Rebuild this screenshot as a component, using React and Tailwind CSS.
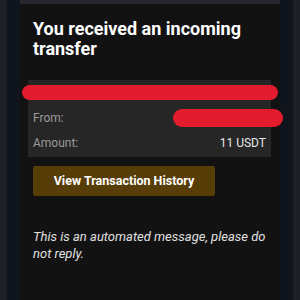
export default function App() {
  return (
    <div className="w-[300px] h-[300px] overflow-hidden bg-[#1c1f26] px-[7px]" style={{ fontFamily: "Roboto, 'Noto Sans', sans-serif" }}>
      <div className="h-full bg-[#0f141d] px-[13px]">
        <div className="h-full bg-[#121212] flex flex-col">
          <div className="h-[4px] bg-[#26282d]" />
          <div className="pt-[15px] pl-[13px] pr-[13px]">
            <h1 className="text-[18px] leading-[20px] font-bold text-white">
              You received an incoming transfer
            </h1>
          </div>
          <div className="mt-[21px] ml-[8px] mr-[9px] bg-[#262626] px-[5px] pb-[1px] text-[12px]">
            <div className="relative h-[26px]">
              <div className="absolute top-[5px] left-[-11px] right-[-12px] h-[15px] rounded-full bg-[#e21c2e]" />
            </div>
            <div className="relative flex justify-between leading-[25px]">
              <span className="text-[#9a9a9a]">From:</span>
              <div className="absolute top-[3px] right-[-17px] w-[110px] h-[18px] rounded-full bg-[#e21c2e]" />
            </div>
            <div className="flex justify-between leading-[25px]">
              <span className="text-[#9a9a9a]">Amount:</span>
              <span className="text-[#e6e6e6]">11 USDT</span>
            </div>
          </div>
          <div className="mt-[9px] ml-[13px]">
            <button className="w-[182px] h-[30px] rounded-[2px] bg-[#573d08] text-white font-bold text-[12.5px]">
              View Transaction History
            </button>
          </div>
          <p className="mt-[32px] pl-[13px] pr-[13px] italic text-[13px] leading-[17px] text-[#e0e0e0]">
            This is an automated message, please do not reply.
          </p>
        </div>
      </div>
    </div>
  );
}
